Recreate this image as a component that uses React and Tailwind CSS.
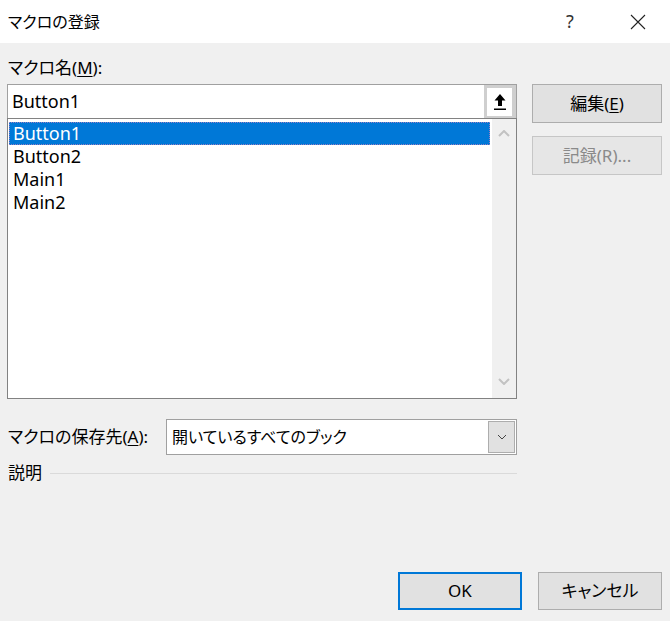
import React from "react";

const FONT = "[font-family:'Noto_Sans','Noto_Sans_CJK_JP',sans-serif] [font-feature-settings:'palt']";

function UpArrowIcon() {
  return (
    <svg width="14" height="18" viewBox="0 0 14 18">
      <path d="M7 1 L12.5 7.5 L9 7.5 L9 13 L5 13 L5 7.5 L1.5 7.5 Z" fill="#000" />
      <rect x="1" y="15.5" width="12" height="1.5" fill="#000" />
    </svg>
  );
}

function Chevron({ up = false, color = "#c2c2c2", w = 12, h = 7, sw = 2 }) {
  return (
    <svg width={w} height={h} viewBox={`0 0 ${w} ${h}`}>
      <polyline
        points={up ? `1,${h - 1} ${w / 2},1 ${w - 1},${h - 1}` : `1,1 ${w / 2},${h - 1} ${w - 1},1`}
        fill="none"
        stroke={color}
        strokeWidth={sw}
      />
    </svg>
  );
}

export default function App() {
  const macros = ["Button1", "Button2", "Main1", "Main2"];

  return (
    <div className={`w-[670px] h-[621px] bg-[#f0f0f0] flex flex-col text-black ${FONT}`}>
      {/* title bar */}
      <div className="h-[43px] bg-white flex items-center shrink-0">
        <div className="pl-[8px] text-[16px] flex-1">マクロの登録</div>
        <div className="w-[40px] text-center text-[18px] mr-[33px] text-[#333]">?</div>
        <div className="w-[30px] mr-[17px] flex justify-center">
          <svg width="16" height="16" viewBox="0 0 16 16">
            <path d="M1 1 L15 15 M15 1 L1 15" stroke="#222" strokeWidth="1.1" fill="none" />
          </svg>
        </div>
      </div>

      <div className="flex-1 flex flex-col pl-[7px] pr-[8px]">
        <div className="flex">
          <div className="w-[510px]">
            <div className="mt-[13px] h-[23px] pl-[1px] text-[17px] leading-[23px]">
              マクロ名(<span className="underline underline-offset-2">M</span>):
            </div>
            {/* name input */}
            <div className="mt-[5px] h-[35px] border border-[#a0a0a0] bg-white flex">
              <div className="flex-1 pl-[4px] text-[18px] leading-[33px]">Button1</div>
              <div className="w-[32px] bg-[#cfcfcf] p-[3px] pr-[4px] pb-[2px] flex">
                <div className="flex-1 bg-white flex items-center justify-center">
                  <UpArrowIcon />
                </div>
              </div>
            </div>
            {/* macro list */}
            <div className="-mt-px h-[281px] border border-[#828282] bg-white flex">
              <div className="flex-1 pt-[3px] pl-[1px]">
                {macros.map((m, i) => (
                  <div
                    key={m}
                    className={`h-[23px] pl-[4px] text-[18px] leading-[23px] ${
                      i === 0 ? "bg-[#0078d7] text-white outline outline-1 outline-dotted outline-[#9a7fc0] -outline-offset-1" : ""
                    }`}
                  >
                    {m}
                  </div>
                ))}
              </div>
              <div className="w-[24px] ml-[2px] bg-[#f0f0f0] flex flex-col items-center justify-between pt-[11px] pb-[13px]">
                <Chevron up />
                <Chevron />
              </div>
            </div>
          </div>

          {/* side buttons */}
          <div className="ml-[15px] w-[130px] pt-[41px] flex flex-col gap-[13px]">
            <button className="h-[39px] border border-[#adadad] bg-[#e1e1e1] text-[17px]">
              編集(<span className="underline underline-offset-2">E</span>)
            </button>
            <button className="h-[39px] border border-[#c6c6c6] bg-[#e6e6e6] text-[17px] text-[#8a8a8a]">
              記録(R)...
            </button>
          </div>
        </div>

        {/* save location */}
        <div className="mt-[20px] flex items-center w-[510px]">
          <div className="w-[159px] pl-[1px] text-[17px]">
            マクロの保存先(<span className="underline underline-offset-2">A</span>):
          </div>
          <div className="flex-1 h-[36px] border border-[#a0a0a0] bg-white flex">
            <div className="flex-1 pl-[5px] text-[16px] leading-[34px]">開いているすべてのブック</div>
            <div className="w-[27px] my-px mr-px border border-[#adadad] bg-[#e1e1e1] flex items-center justify-center">
              <Chevron color="#444" w={10} h={6} sw={1} />
            </div>
          </div>
        </div>

        {/* description */}
        <div className="mt-[7px] flex items-center w-[510px]">
          <div className="pl-[1px] text-[17px] leading-[22px]">説明</div>
          <div className="flex-1 ml-[8px] h-px bg-[#dadada]" />
        </div>

        <div className="flex-1" />

        {/* footer */}
        <div className="flex justify-end gap-[16px] pb-[11px]">
          <button className="w-[124px] h-[38px] border-2 border-[#0078d7] bg-[#e1e1e1] text-[17px]">OK</button>
          <button className="w-[124px] h-[38px] border border-[#adadad] bg-[#e1e1e1] text-[17px]">キャンセル</button>
        </div>
      </div>
    </div>
  );
}
